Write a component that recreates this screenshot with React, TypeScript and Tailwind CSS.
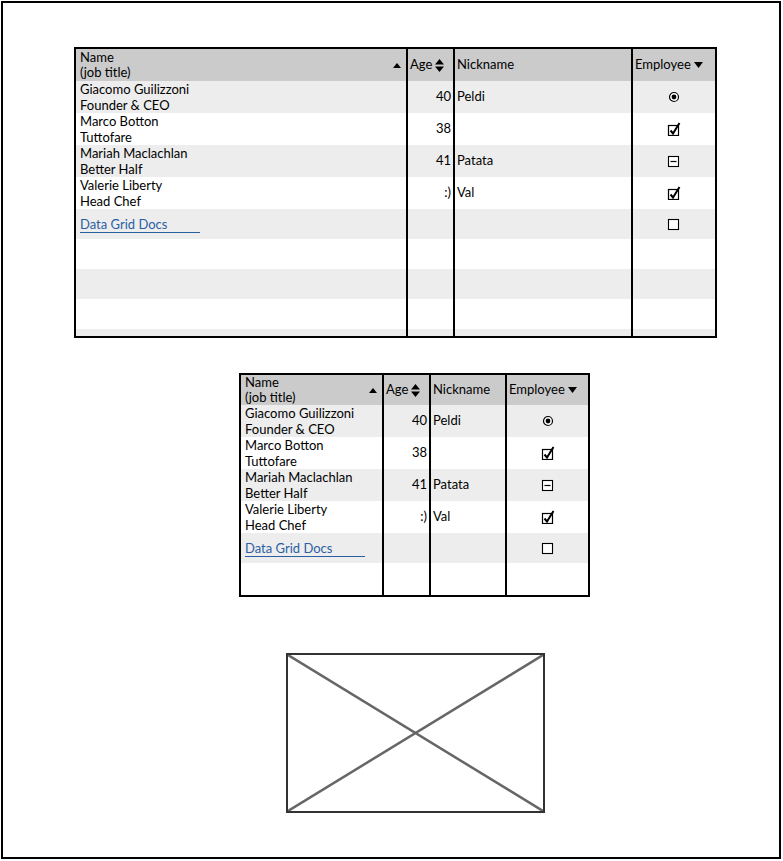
import React from 'react';

type Emp = 'radio' | 'check' | 'mixed' | 'empty' | null;

type Row = {
  name?: string;
  title?: string;
  age?: string;
  nick?: string;
  emp: Emp;
  link?: boolean;
  h: string;
};

const people: Row[] = [
  { name: 'Giacomo Guilizzoni', title: 'Founder & CEO', age: '40', nick: 'Peldi', emp: 'radio', h: 'h-[32px]' },
  { name: 'Marco Botton', title: 'Tuttofare', age: '38', nick: '', emp: 'check', h: 'h-[32px]' },
  { name: 'Mariah Maclachlan', title: 'Better Half', age: '41', nick: 'Patata', emp: 'mixed', h: 'h-[32px]' },
  { name: 'Valerie Liberty', title: 'Head Chef', age: ':)', nick: 'Val', emp: 'check', h: 'h-[32px]' },
  { link: true, emp: 'empty', h: 'h-[30px]' },
];

const bigRows: Row[] = [
  ...people,
  { emp: null, h: 'h-[30px]' },
  { emp: null, h: 'h-[30px]' },
  { emp: null, h: 'h-[30px]' },
  { emp: null, h: 'h-[30px]' },
];

const smallRows: Row[] = [...people, { emp: null, h: 'h-[32px]' }];

function EmpIcon({ kind }: { kind: Emp }) {
  if (kind === 'radio')
    return (
      <svg width="12" height="12" viewBox="0 0 12 12">
        <circle cx="6" cy="6" r="4.5" fill="white" stroke="black" strokeWidth="1.2" />
        <circle cx="6" cy="6" r="2.4" fill="black" />
      </svg>
    );
  if (kind === 'check')
    return (
      <svg width="14" height="14" viewBox="0 0 14 14">
        <rect x="1.5" y="3.5" width="10" height="10" fill="white" stroke="black" strokeWidth="1.2" />
        <path d="M3.5 8.5 L6 11.5 L12.5 1" fill="none" stroke="black" strokeWidth="2" />
      </svg>
    );
  if (kind === 'mixed')
    return (
      <svg width="14" height="14" viewBox="0 0 14 14">
        <rect x="1.5" y="2.5" width="10" height="10" fill="white" stroke="black" strokeWidth="1.1" />
        <path d="M3.5 7.5 H9.5" stroke="black" strokeWidth="1.2" />
      </svg>
    );
  if (kind === 'empty')
    return (
      <svg width="14" height="14" viewBox="0 0 14 14">
        <rect x="1.5" y="2.5" width="10" height="10" fill="white" stroke="black" strokeWidth="1.1" />
      </svg>
    );
  return null;
}

function DataGrid({
  rows,
  cols,
  headerH,
  boxH,
}: {
  rows: Row[];
  cols: [string, string, string, string];
  headerH: string;
  boxH: string;
}) {
  const [nameW, ageW, nickW, empW] = cols;
  return (
    <div className={`border-2 border-black overflow-hidden bg-white ${boxH}`}>
      <div className={`flex bg-[#cbcbcb] ${headerH}`}>
        <div className={`${nameW} flex items-center pl-[4px] pr-[5px]`}>
          <div className="flex-1 leading-[15px]">
            <div>Name</div>
            <div>(job title)</div>
          </div>
          <svg width="8" height="5" viewBox="0 0 8 5">
            <polygon points="0,5 4,0 8,5" fill="black" />
          </svg>
        </div>
        <div className={`${ageW} flex items-center border-l-2 border-black pl-[2px]`}>
          <span>Age</span>
          <svg width="9" height="13" viewBox="0 0 9 13" className="ml-[3px]">
            <polygon points="0,5.5 4.5,0 9,5.5" fill="black" />
            <polygon points="0,7.5 4.5,13 9,7.5" fill="black" />
          </svg>
        </div>
        <div className={`${nickW} flex items-center border-l-2 border-black pl-[2px]`}>Nickname</div>
        <div className={`${empW} flex items-center border-l-2 border-black pl-[2px]`}>
          <span>Employee</span>
          <svg width="9" height="6" viewBox="0 0 9 6" className="ml-[3px]">
            <polygon points="0,0 4.5,6 9,0" fill="black" />
          </svg>
        </div>
      </div>
      {rows.map((r, i) => (
        <div key={i} className={`flex ${r.h} ${i % 2 === 0 ? 'bg-[#ededed]' : 'bg-white'}`}>
          <div className={`${nameW} flex flex-col justify-center pl-[4px] leading-[16px]`}>
            {r.link ? (
              <span className="w-[120px] border-b-[1.5px] border-[#2b5fa3] text-[#2b5fa3] leading-[16px]">
                Data Grid Docs
              </span>
            ) : (
              <>
                <div>{r.name}</div>
                <div>{r.title}</div>
              </>
            )}
          </div>
          <div className={`${ageW} flex items-center justify-end border-l-2 border-black pr-[2px]`}>{r.age}</div>
          <div className={`${nickW} flex items-center border-l-2 border-black pl-[2px]`}>{r.nick}</div>
          <div className={`${empW} flex items-center justify-center border-l-2 border-black`}>
            <EmpIcon kind={r.emp} />
          </div>
        </div>
      ))}
    </div>
  );
}

export default function App() {
  return (
    <div
      className="w-[783px] h-[861px] bg-white p-[1px] text-[13px] text-black"
      style={{ fontFamily: 'Lato, "Open Sans", sans-serif' }}
    >
      <div className="w-[780px] h-[858px] border-2 border-black flex flex-col items-start">
        <div className="ml-[71px] mt-[44px] w-[643px]">
          <DataGrid
            rows={bigRows}
            cols={['w-[330px]', 'w-[47px]', 'w-[178px]', 'w-[84px]']}
            headerH="h-[32px]"
            boxH="h-[291px]"
          />
        </div>
        <div className="ml-[236px] mt-[35px] w-[351px]">
          <DataGrid
            rows={smallRows}
            cols={['w-[141px]', 'w-[47px]', 'w-[76px]', 'w-[83px]']}
            headerH="h-[30px]"
            boxH="h-[224px]"
          />
        </div>
        <div className="ml-[283px] mt-[56px] w-[259px] h-[160px] border-2 border-[#333] relative">
          <svg className="absolute inset-0 w-full h-full" viewBox="0 0 255 156" preserveAspectRatio="none">
            <line x1="0" y1="0" x2="255" y2="156" stroke="#666" strokeWidth="2.5" />
            <line x1="255" y1="0" x2="0" y2="156" stroke="#666" strokeWidth="2.5" />
          </svg>
        </div>
      </div>
    </div>
  );
}
